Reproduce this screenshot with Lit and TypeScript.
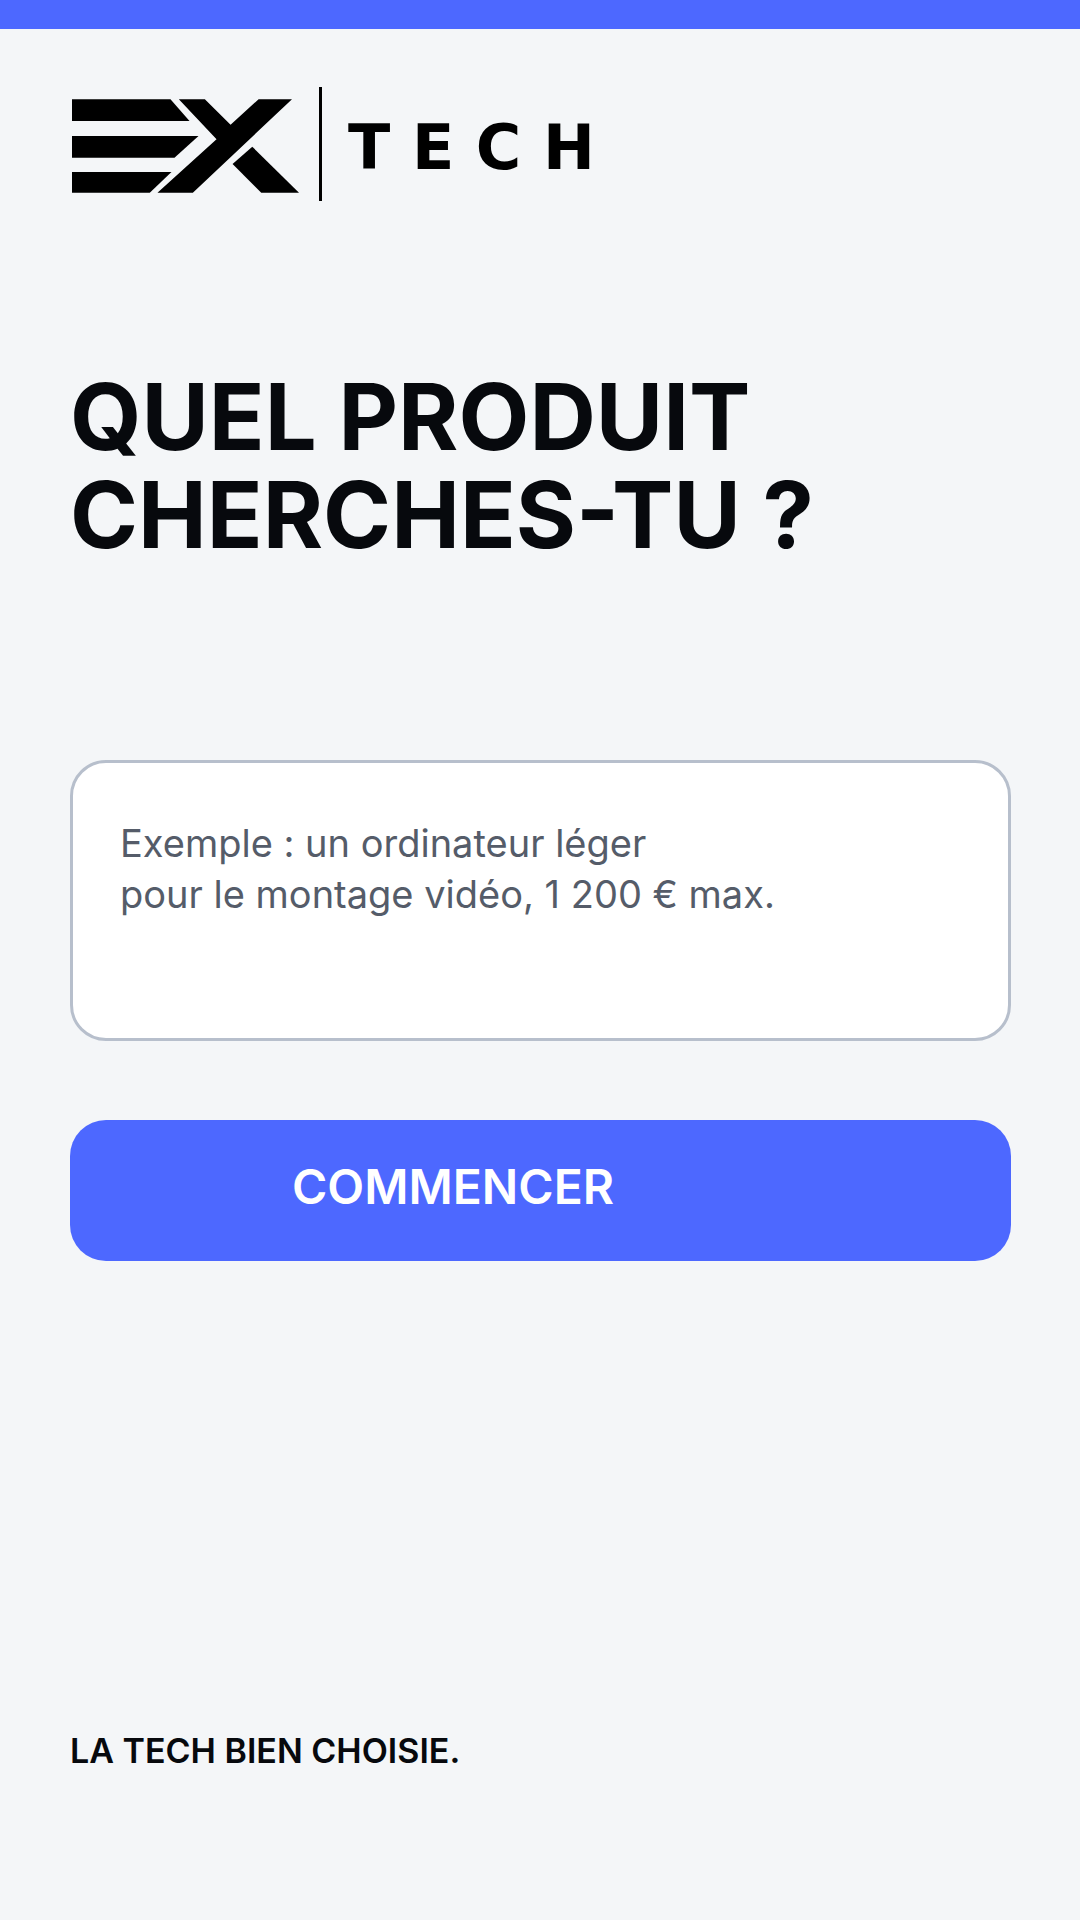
import { LitElement, css, html } from 'lit';
import { customElement, property, state } from 'lit/decorators.js';

@customElement('brand-logo')
export class BrandLogo extends LitElement {
  render() {
    return html`
      <svg class="mark" viewBox="0 0 680 280" role="img" aria-label="EX">
        <path d="M0 0H295L352 65H0Z" />
        <path d="M0 110H379L307 175H0Z" />
        <path d="M0 218H298L233 280H0Z" />
        <path d="M320 0H398L475 76L559 0H659L362 280H256L433 120Z" />
        <path d="M540 142L680 280H567L481 194Z" />
      </svg>
      <span class="divider"></span>
      <span class="word">T E C H</span>
    `;
  }

  static styles = css`
    :host {
      display: flex;
      align-items: center;
      color: #000;
    }
    .mark {
      width: 227px;
      height: 94px;
      margin-right: 20px;
      padding-top: 4px;
      fill: currentColor;
    }
    .divider {
      width: 3px;
      height: 114px;
      margin-right: 26px;
      background: currentColor;
    }
    .word {
      padding-top: 8px;
      font: 700 62px/70px "DejaVu Sans", sans-serif;
      white-space: nowrap;
    }
  `;
}

@customElement('search-form')
export class SearchForm extends LitElement {
  @property({ type: String })
  placeholder : string = '';

  @state()
  private query : string = '';

  private onInput(e : Event) {
    this.query = (e.target as HTMLTextAreaElement).value;
  }

  private onSubmit(e : Event) {
    e.preventDefault();
    this.dispatchEvent(new CustomEvent('start', { detail: this.query }));
  }

  render() {
    return html`
      <form @submit=${this.onSubmit}>
        <h1>
          <label for="query">
            <span class="line">Quel produit</span>
            <span class="line">cherches-tu ?</span>
          </label>
        </h1>
        <textarea
          id="query"
          rows="4"
          placeholder=${this.placeholder}
          .value=${this.query}
          @input=${this.onInput}
        ></textarea>
        <button type="submit">Commencer</button>
      </form>
    `;
  }

  static styles = css`
    :host {
      display: block;
    }
    form {
      display: flex;
      flex-direction: column;
    }
    h1 {
      margin: 0 0 196px;
      font-size: 92px;
      font-weight: 700;
      line-height: 98px;
      text-transform: uppercase;
    }
    label, .line { display: block; }
    textarea {
      box-sizing: border-box;
      width: 100%;
      margin: 0 0 79px;
      padding: 55px 47px 16px;
      border: 3px solid var(--border);
      border-radius: 36px;
      background: #fff;
      color: var(--ink);
      font: 400 38px/51px var(--font);
      resize: none;
      overflow: hidden;
    }
    textarea::placeholder {
      color: var(--muted);
      opacity: 1;
    }
    button {
      padding: 38px 222px 45px;
      border: 0;
      border-radius: 36px;
      background: var(--accent);
      color: #fff;
      font: 600 48px/58px var(--font);
      text-align: left;
      text-transform: uppercase;
      cursor: pointer;
    }
  `;
}

@customElement('app-root')
export class AppRoot extends LitElement {
  render() {
    return html`
      <main>
        <brand-logo></brand-logo>
        <search-form
          placeholder=${'Exemple : un ordinateur léger\npour le montage vidéo, 1 200 € max.'}
        ></search-form>
      </main>
      <footer>La tech bien choisie.</footer>
    `;
  }

  static styles = css`
    :host {
      --accent: #4d68ff;
      --ink: #07090d;
      --muted: #555c69;
      --border: #b7bfcc;
      --font: Inter, sans-serif;

      box-sizing: border-box;
      display: flex;
      flex-direction: column;
      min-height: 100vh;
      padding: 0 69px 149px 70px;
      border-top: 29px solid var(--accent);
      background: #f4f6f8;
      color: var(--ink);
      font-family: var(--font);
    }
    main {
      display: flex;
      flex-direction: column;
      gap: 167px;
      padding-top: 58px;
    }
    brand-logo {
      padding-left: 2px;
    }
    footer {
      margin-top: auto;
      font-size: 34px;
      font-weight: 600;
      line-height: 41px;
      text-transform: uppercase;
    }
  `;
}

declare global {
  interface HTMLElementTagNameMap {
    'brand-logo': BrandLogo
    'search-form': SearchForm
    'app-root': AppRoot
  }
}
